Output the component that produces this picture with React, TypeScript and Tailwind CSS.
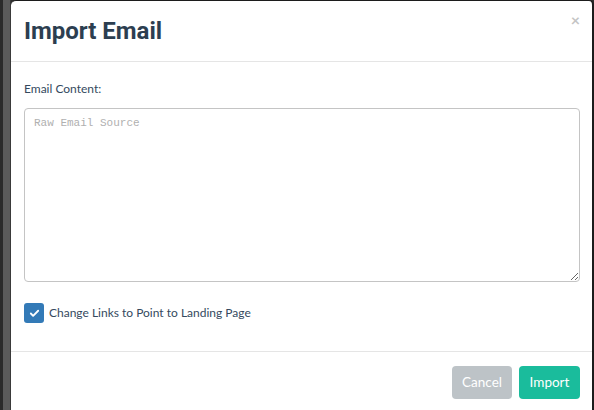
import { Check } from 'lucide-react';

export default function App() {
  return (
    <div className="w-[594px] h-[410px] flex bg-[#2e2e2e] overflow-hidden">
      {/* backdrop strip */}
      <div className="w-[3px] bg-[#2b2b2b]" />
      <div className="w-[7px] bg-[#5b5b5b]" />
      <div className="w-px bg-[#3a3a3a]" />

      {/* modal */}
      <div className="flex-1 flex flex-col bg-white rounded-t-[5px] border-r-2 border-t border-[#1c1c1c] font-['Lato','Noto_Sans',sans-serif]">
        <div className="h-[61px] flex items-start justify-between pl-[13px] pr-[12px] border-b border-[#e5e5e5]">
          <h1 className="mt-[14px] text-[24px] leading-[32px] font-bold text-[#2c3e50] font-['Roboto',sans-serif]">
            Import Email
          </h1>
          <button className="mt-[11px] text-[16px] leading-[16px] font-bold text-[#c4c4c4]">×</button>
        </div>

        <div className="flex flex-col pl-[13px] pt-[19px]">
          <label className="text-[12px] leading-[16px] text-[#34495e]">Email Content:</label>
          <textarea
            placeholder="Raw Email Source"
            className="mt-[11px] h-[174px] w-[556px] rounded-[4px] border border-[#c4c4c4] px-[9px] py-[6px] text-[11px] font-['Liberation_Mono',monospace] placeholder:text-[#b0b0b0] outline-none"
          />
          <div className="mt-[21px] flex items-center gap-[5px]">
            <span className="w-[20px] h-[20px] rounded-[3px] bg-[#337ab7] flex items-center justify-center">
              <Check size={11} strokeWidth={4} className="text-white" />
            </span>
            <span className="text-[12px] leading-[16px] text-[#34495e]">Change Links to Point to Landing Page</span>
          </div>
        </div>

        <div className="mt-[28px] border-t border-[#e5e5e5] flex justify-end gap-[7px] pr-[12px] pt-[14px]">
          <button className="w-[60px] h-[33px] rounded-[4px] bg-[#bdc3c7] text-white text-[13.5px]">Cancel</button>
          <button className="w-[61px] h-[33px] rounded-[4px] bg-[#1abc9c] text-white text-[13.5px]">Import</button>
        </div>
      </div>
    </div>
  );
}
